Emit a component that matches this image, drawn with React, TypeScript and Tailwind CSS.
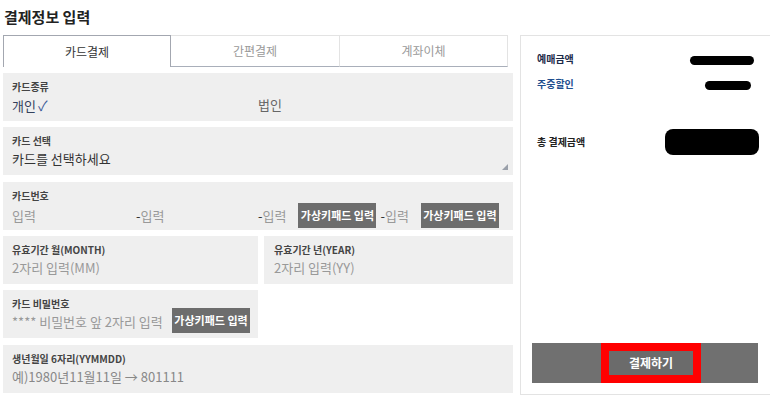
import React from "react";

const font = { fontFamily: '"Noto Sans CJK KR", "Noto Sans", sans-serif' };

function KeypadBtn() {
  return (
    <span className="inline-flex h-[25px] w-[78px] items-center justify-center bg-[#6d6d6d] text-[11px] font-bold leading-none text-white">
      가상키패드 입력
    </span>
  );
}

function Label({ children }: { children: React.ReactNode }) {
  return <div className="text-[10px] font-bold leading-[14px] text-[#444]">{children}</div>;
}

export default function App() {
  return (
    <div className="relative h-[397px] w-[770px] overflow-hidden bg-white" style={font}>
      <div className="flex">
        {/* Left column */}
        <div className="ml-[3px] w-[510px]">
          <div className="h-[35px] pl-[1px] pt-[6px] text-[15px] font-bold leading-[22px] text-[#222]">
            결제정보 입력
          </div>
          {/* Tabs */}
          <div className="flex h-[32px] w-[505px]">
            <div className="flex w-[168px] items-center justify-center border-x border-t border-[#a3a7b0] bg-white text-[12px] text-[#333]">
              카드결제
            </div>
            <div className="flex w-[169px] items-center justify-center border-r border-t border-b border-t-[#e3e3e3] border-r-[#e3e3e3] border-b-[#a9afba] text-[12px] text-[#9a9a9a]">
              간편결제
            </div>
            <div className="flex w-[168px] items-center justify-center border-r border-t border-b border-t-[#e3e3e3] border-r-[#e3e3e3] border-b-[#a9afba] text-[12px] text-[#9a9a9a]">
              계좌이체
            </div>
          </div>

          {/* Row 1 */}
          <div className="mt-[6px] h-[48px] bg-[#efefef] pl-[9px] pt-[7px]">
            <Label>카드종류</Label>
            <div className="mt-[1px] flex text-[13px] leading-[20px]">
              <span className="w-[246px] text-[#33415c]">
                개인<span className="ml-[2px] text-[14px] text-[#3d5c99]">✓</span>
              </span>
              <span className="text-[#666]">법인</span>
            </div>
          </div>

          {/* Row 2 */}
          <div className="relative mt-[6px] h-[48px] bg-[#efefef] pl-[9px] pt-[7px]">
            <Label>카드 선택</Label>
            <div className="mt-[1px] text-[13px] leading-[20px] text-[#333]">카드를 선택하세요</div>
            <svg className="absolute bottom-[5px] right-[5px]" width="6" height="6" viewBox="0 0 6 6">
              <polygon points="6,0 6,6 0,6" fill="#9aa0aa" />
            </svg>
          </div>

          {/* Row 3 */}
          <div className="mt-[7px] h-[48px] bg-[#efefef] pl-[9px] pt-[7px]">
            <Label>카드번호</Label>
            <div className="flex items-center text-[13px] leading-[20px] text-[#999]">
              <span className="w-[124px]">입력</span>
              <span className="w-[122px]">
                <span className="text-[#333]">-</span>입력
              </span>
              <span className="mr-[12px]">
                <span className="text-[#333]">-</span>입력
              </span>
              <KeypadBtn />
              <span className="ml-[4px] mr-[12px]">
                <span className="text-[#333]">-</span>입력
              </span>
              <KeypadBtn />
            </div>
          </div>

          {/* Row 4 */}
          <div className="mt-[6px] flex h-[48px] gap-[6px]">
            <div className="w-[255px] bg-[#efefef] pl-[9px] pt-[7px]">
              <Label>유효기간 월(MONTH)</Label>
              <div className="mt-[1px] text-[13px] leading-[20px] text-[#999]">2자리 입력(MM)</div>
            </div>
            <div className="w-[249px] bg-[#efefef] pl-[10px] pt-[7px]">
              <Label>유효기간 년(YEAR)</Label>
              <div className="mt-[1px] text-[13px] leading-[20px] text-[#999]">2자리 입력(YY)</div>
            </div>
          </div>

          {/* Row 5 */}
          <div className="mt-[6px] flex h-[48px] w-[255px] bg-[#efefef] pl-[9px] pt-[7px]">
            <div>
              <Label>카드 비밀번호</Label>
              <div className="mt-[1px] text-[13px] leading-[20px] text-[#999]">**** 비밀번호 앞 2자리 입력</div>
            </div>
            <div className="ml-auto mr-[8px] mt-[9px]">
              <KeypadBtn />
            </div>
          </div>

          {/* Row 6 */}
          <div className="mt-[7px] h-[48px] bg-[#efefef] pl-[9px] pt-[7px]">
            <Label>생년월일 6자리(YYMMDD)</Label>
            <div className="mt-[1px] text-[13px] leading-[20px] text-[#888]">예)1980년11월11일 → 801111</div>
          </div>
        </div>

        {/* Right panel */}
        <div className="ml-[7px] mt-[35px] flex h-[360px] w-[260px] flex-col border border-[#e3e3e3] pl-[16px] pr-[20px]">
          <div className="mt-[15px] flex h-[14px] items-center text-[10px] font-bold text-[#1c2a48]">
            예매금액
            <span className="ml-auto mr-[5px] mt-[4px] h-[9px] w-[64px] rounded-full bg-black" />
          </div>
          <div className="mt-[11px] flex h-[14px] items-center text-[10px] font-bold text-[#1f4f8f]">
            주중할인
            <span className="ml-auto mr-[8px] mt-[4px] h-[9px] w-[46px] rounded-full bg-black" />
          </div>
          <div className="mt-[46px] flex items-start text-[10px] font-bold text-[#222]">
            <span className="mt-[-2px]">총 결제금액</span>
            <span className="ml-auto mt-[-7px] h-[26px] w-[94px] rounded-[8px] bg-black" />
          </div>
          <div className="mt-auto mb-[11px] flex h-[40px] w-[226px] -translate-x-[5px] justify-center bg-[#707070]">
            <div className="ml-[12px] flex w-[100px] items-center justify-center border-[8px] border-[#ff0000] bg-[#6b6b6b] text-[12px] font-bold text-white">
              결제하기
            </div>
          </div>
        </div>
      </div>
    </div>
  );
}
